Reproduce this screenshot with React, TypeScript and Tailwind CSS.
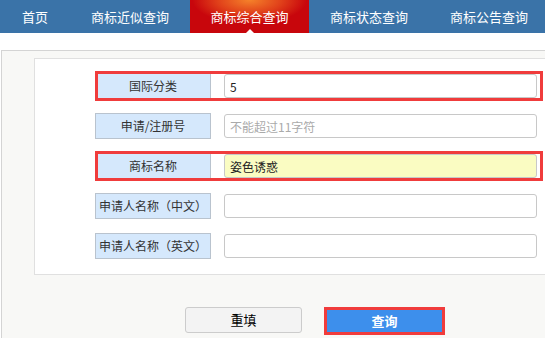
import React from "react";

const tabs = [
  { name: "首页", w: "w-[70px]" },
  { name: "商标近似查询", w: "w-[120px]" },
  { name: "商标综合查询", w: "w-[119px]", active: true },
  { name: "商标状态查询", w: "w-[120px]" },
  { name: "商标公告查询", w: "w-[120px]" },
];

const rows = [
  { label: "国际分类", value: "5", mark: true },
  { label: "申请/注册号", placeholder: "不能超过11字符" },
  { label: "商标名称", value: "姿色诱惑", mark: true, yellow: true },
  { label: "申请人名称（中文）" },
  { label: "申请人名称（英文）" },
];

const Row = ({ r }: { r: (typeof rows)[number] }) => (
  <div className="relative flex items-center h-[26px]">
    <div className="w-[116px] h-[26px] flex items-center justify-center border border-[#b9c3ce] bg-[#d5e8fc] text-[12px] text-[#333] whitespace-nowrap">
      {r.label}
    </div>
    <input
      readOnly
      value={r.value ?? ""}
      placeholder={r.placeholder}
      className={
        "ml-[13px] w-[313px] h-[24px] px-[5px] border border-[#c8c8c8] rounded-[3px] text-[12px] text-[#222] placeholder:text-[#aaa] outline-none " +
        (r.yellow ? "bg-[#fafcc2]" : "bg-white")
      }
    />
    {r.mark && (
      <div className="absolute left-0 top-[-2px] w-[448px] h-[30px] border-[3px] border-[#f03c3c] pointer-events-none" />
    )}
  </div>
);

export default function App() {
  return (
    <div className="w-[545px] h-[338px] overflow-hidden bg-white font-['Noto_Sans_CJK_SC','Noto_Sans',sans-serif]">
      {/* nav */}
      <div className="flex h-[33px] bg-[#3a73a8] w-[560px]">
        {tabs.map((t) => (
          <div
            key={t.name}
            className={
              "relative flex items-center justify-center text-[13px] text-white " +
              t.w +
              (t.active
                ? " bg-[radial-gradient(ellipse_60%_90%_at_50%_0%,#f5822a_0%,#e0401a_45%,#c8060c_80%)]"
                : "")
            }
          >
            {t.name}
            {t.active && (
              <div className="absolute bottom-0 left-1/2 -translate-x-1/2 w-0 h-0 border-l-[4px] border-r-[4px] border-b-[4px] border-l-transparent border-r-transparent border-b-white" />
            )}
          </div>
        ))}
      </div>

      {/* panel */}
      <div className="mt-[17px] ml-[1px] w-[600px] h-[300px] border-l border-t border-[#d4d4d4] bg-[#f8f8f6] pt-[7px] pl-[32px]">
        <div className="w-[560px] bg-white border border-[#e0e0e0] pt-[14px] pb-[15px] pl-[60px] flex flex-col gap-[14px]">
          {rows.map((r) => (
            <Row key={r.label} r={r} />
          ))}
        </div>

        <div className="flex items-start mt-[32px] pl-[151px]">
          <button className="w-[117px] h-[26px] border border-[#cccccc] rounded-[3px] bg-[#f3f3f3] text-[13px] text-black">
            重填
          </button>
          <div className="ml-[22px] border-[3px] border-[#f03c3c]">
            <button className="w-[115px] h-[22px] bg-[#3d8fec] text-[13px] font-bold text-white flex items-center justify-center">
              查询
            </button>
          </div>
        </div>
      </div>
    </div>
  );
}
